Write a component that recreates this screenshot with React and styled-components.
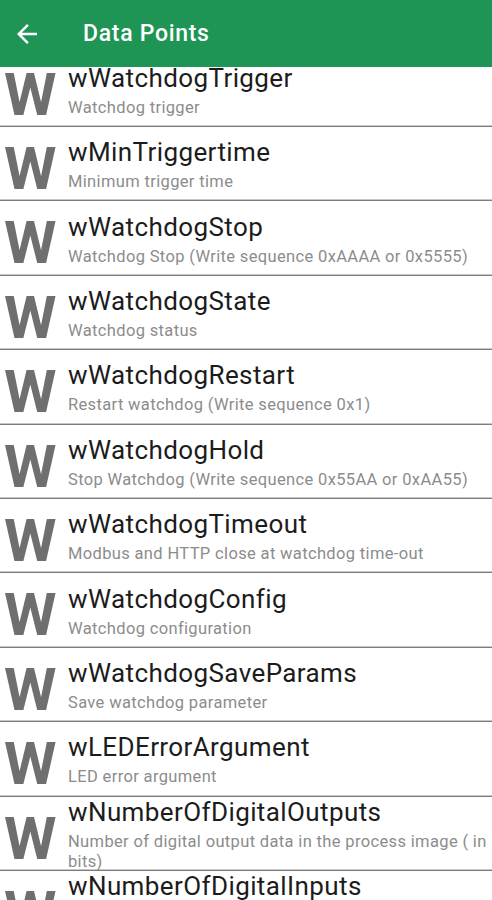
import React from 'react'
import styled, { createGlobalStyle } from 'styled-components'

const GlobalStyle = createGlobalStyle`
  html, body {
    margin: 0;
    padding: 0;
    background: #ffffff;
    font-family: Roboto, "Noto Sans", Arial, sans-serif;
  }
`

const points = [
  ['wWatchdogTrigger', 'Watchdog trigger'],
  ['wMinTriggertime', 'Minimum trigger time'],
  ['wWatchdogStop', 'Watchdog Stop (Write sequence 0xAAAA or 0x5555)'],
  ['wWatchdogState', 'Watchdog status'],
  ['wWatchdogRestart', 'Restart watchdog (Write sequence 0x1)'],
  ['wWatchdogHold', 'Stop Watchdog (Write sequence 0x55AA or 0xAA55)'],
  ['wWatchdogTimeout', 'Modbus and HTTP close at watchdog time-out'],
  ['wWatchdogConfig', 'Watchdog configuration'],
  ['wWatchdogSaveParams', 'Save watchdog parameter'],
  ['wLEDErrorArgument', 'LED error argument'],
  ['wNumberOfDigitalOutputs', 'Number of digital output data in the process image ( in bits)'],
  ['wNumberOfDigitalInputs', 'Number of digital input data in the process image ( in bits)'],
]

function BackArrow() {
  return (
    <svg width="30" height="30" viewBox="0 0 24 24">
      <path d="M20 11H7.83l5.59-5.59L12 4l-8 8 8 8 1.41-1.41L7.83 13H20v-2z" fill="#fff" />
    </svg>
  )
}

function App() {
  return (
    <Screen>
      <GlobalStyle />
      <AppBar>
        <BackButton><BackArrow /></BackButton>
        <Title>Data Points</Title>
      </AppBar>
      <ListViewport>
        <List>
          {points.map(([name, desc]) => (
            <Row key={name}>
              <TypeLetter>W</TypeLetter>
              <RowText>
                <Name>{name}</Name>
                <Desc>{desc}</Desc>
              </RowText>
            </Row>
          ))}
        </List>
      </ListViewport>
    </Screen>
  )
}

export default App

const Screen = styled.div`
  width: 492px;
  height: 900px;
  display: flex;
  flex-direction: column;
  overflow: hidden;
  background: #fff;
`
const AppBar = styled.div`
  height: 67px;
  flex-shrink: 0;
  display: flex;
  align-items: center;
  background-color: #1e9455;
  color: white;
`
const BackButton = styled.div`
  width: 30px;
  height: 30px;
  margin-left: 12px;
  display: flex;
`
const Title = styled.div`
  margin-left: 41px;
  font-size: 23px;
  font-weight: 500;
  letter-spacing: 0.7px;
`
const ListViewport = styled.div`
  flex: 1;
  overflow: hidden;
`
// list is scrolled a little, first row partly under the bar
const List = styled.div`
  margin-top: -14.4px;
`
const Row = styled.div`
  height: 74.4px;
  box-sizing: border-box;
  display: flex;
  align-items: center;
  overflow: hidden;
  background: #fff;
  border-bottom: 1px solid #7d7d7d;
  box-shadow: inset 0 -1px 0 #c8c8c8;
`
const TypeLetter = styled.div`
  align-self: flex-start;
  width: 68px;
  flex-shrink: 0;
  padding-left: 4px;
  margin-top: 12px;
  box-sizing: border-box;
  font-size: 60px;
  font-weight: 700;
  color: #6f6f6f;
  line-height: 60px;
`
const RowText = styled.div`
  display: flex;
  flex-direction: column;
  min-width: 0;
`
const Name = styled.div`
  font-size: 26px;
  letter-spacing: 0.4px;
  color: #1c1c1c;
  line-height: 34px;
`
const Desc = styled.div`
  margin-top: 3px;
  font-size: 16.5px;
  letter-spacing: 0.35px;
  color: #8c8c8c;
  line-height: 20px;
`
